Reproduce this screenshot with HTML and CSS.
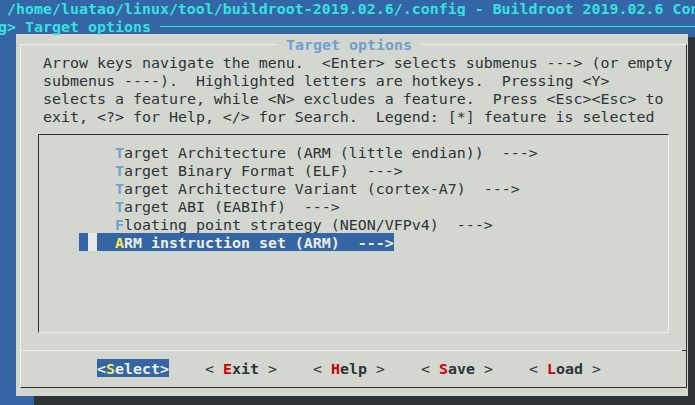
FILE: index.html
```html
<!DOCTYPE html>
<html lang="en">
<head>
    <meta charset="UTF-8">
    <meta name="viewport" content="width=device-width, initial-scale=1.0">
    <title>Buildroot menuconfig - Target options</title>
    <link rel="stylesheet" href="styles.css">
</head>
<body>
    <div class="screen">
        <div class="backtitle">/home/luatao/linux/tool/buildroot-2019.02.6/.config - Buildroot 2019.02.6 Configuration</div>
        <div class="crumbs">
            <span class="crumb-text">g&gt; Target options</span>
            <span class="rule"></span>
        </div>

        <div class="dialog">
            <div class="frame">
                <div class="dialog-title"><span>Target options</span></div>

                <!-- help text -->
                <div class="prompt">
                    <div class="line">Arrow keys navigate the menu.  &lt;Enter&gt; selects submenus ---&gt; (or empty</div>
                    <div class="line">submenus ----).  Highlighted letters are hotkeys.  Pressing &lt;Y&gt;</div>
                    <div class="line">selects a feature, while &lt;N&gt; excludes a feature.  Press &lt;Esc&gt;&lt;Esc&gt; to</div>
                    <div class="line">exit, &lt;?&gt; for Help, &lt;/&gt; for Search.  Legend: [*] feature is selected</div>
                </div>

                <!-- menu entries -->
                <div class="menubox">
                    <div class="item"><span class="entry"><b class="key">T</b>arget Architecture (ARM (little endian))  ---&gt;</span></div>
                    <div class="item"><span class="entry"><b class="key">T</b>arget Binary Format (ELF)  ---&gt;</span></div>
                    <div class="item"><span class="entry"><b class="key">T</b>arget Architecture Variant (cortex-A7)  ---&gt;</span></div>
                    <div class="item"><span class="entry"><b class="key">T</b>arget ABI (EABIhf)  ---&gt;</span></div>
                    <div class="item"><span class="entry"><b class="key">F</b>loating point strategy (NEON/VFPv4)  ---&gt;</span></div>
                    <div class="item"><span class="entry selected"><b class="key">A</b>RM instruction set (ARM)  ---&gt;</span></div>
                </div>

                <div class="separator"></div>

                <div class="buttons">
                    <span class="button active">&lt;<b class="hotkey">S</b><b>elect</b>&gt;</span>
                    <span class="button">&lt; <b class="hotkey">E</b><b>xit</b> &gt;</span>
                    <span class="button">&lt; <b class="hotkey">H</b><b>elp</b> &gt;</span>
                    <span class="button">&lt; <b class="hotkey">S</b><b>ave</b> &gt;</span>
                    <span class="button">&lt; <b class="hotkey">L</b><b>oad</b> &gt;</span>
                </div>
            </div>
        </div>
    </div>
</body>
</html>
```

FILE: styles.css
```css
* {
    margin: 0;
    padding: 0;
    box-sizing: border-box;
}

body {
    width: 695px;
    height: 405px;
    overflow: hidden;
    background: #3465a4;
    font-family: 'DejaVu Sans Mono', 'Liberation Mono', monospace;
    font-size: 14.95px;
    line-height: 18px;
    color: #2e3436;
}

b {
    font-weight: bold;
}

.screen {
    padding-left: 7px;
}

/* every text row is 18px tall; glyphs sit 2px low like the terminal */
.backtitle {
    margin-top: -2px;
    height: 18px;
    padding-top: 2px;
    white-space: pre;
    overflow: hidden;
    color: #34e2e2;
    font-weight: bold;
}

.crumbs {
    display: flex;
    align-items: flex-start;
    height: 18px;
    color: #34e2e2;
    font-weight: bold;
}

.crumb-text {
    margin-left: -9px;
    padding: 2px 9px 0 0;
    white-space: pre;
}

.rule {
    flex: 1;
    height: 0;
    margin-top: 10px;
    border-top: 1px solid #34e2e2;
}

.dialog {
    width: 672px;
    margin-left: 9px;
    padding: 10px 1px 8px 4px;
    background: #d3d7cf;
    box-shadow: 18px 3px 0 #2e3436, 18px 11px 0 #2e3436;
}

.frame {
    border-top: 1px solid #eeeeec;
    border-left: 1px solid #eeeeec;
    border-right: 1px solid #2e3436;
    border-bottom: 1px solid #2e3436;
    padding-bottom: 10px;
}

.dialog-title {
    height: 18px;
    margin-top: -11px;
    padding: 2px 0 0 256px;
    white-space: pre;
}

.dialog-title span {
    padding: 0 9px;
    background: #d3d7cf;
    color: #729fcf;
    font-weight: bold;
}

.prompt {
    padding-left: 22px;
}

.prompt .line {
    height: 18px;
    padding-top: 2px;
    white-space: pre;
}

.menubox {
    width: 631px;
    height: 199px;
    margin-top: 10px;
    margin-left: 17px;
    padding-top: 7px;
    border-top: 1px solid #2e3436;
    border-left: 1px solid #2e3436;
    border-right: 1px solid #eeeeec;
    border-bottom: 1px solid #eeeeec;
}

.item {
    height: 18px;
    padding: 1px 0 0 40px;
}

.entry {
    display: inline-block;
    vertical-align: top;
    height: 18px;
    padding: 1px 0 0 36px;
    white-space: pre;
}

.entry .key {
    color: #729fcf;
}

.entry.selected {
    background: linear-gradient(to right, #3465a4 9px, #e8e8e6 9px, #e8e8e6 18px, #3465a4 18px);
    color: #eeeeec;
    font-weight: bold;
}

.entry.selected .key {
    color: #fce94f;
}

.separator {
    height: 1px;
    margin-top: 17px;
    background: linear-gradient(to right, #eeeeec calc(100% - 4px), #2e3436 calc(100% - 4px));
}

.buttons {
    display: flex;
    gap: 36px;
    height: 18px;
    margin-top: 8px;
    padding-left: 76px;
}

.button {
    width: 72px;
    height: 18px;
    padding-top: 1px;
    white-space: pre;
    color: #2e3436;
}

.button .hotkey {
    color: #cc0000;
}

.button.active {
    background: #3465a4;
    color: #eeeeec;
    font-weight: bold;
}

.button.active .hotkey {
    color: #fce94f;
}
```
